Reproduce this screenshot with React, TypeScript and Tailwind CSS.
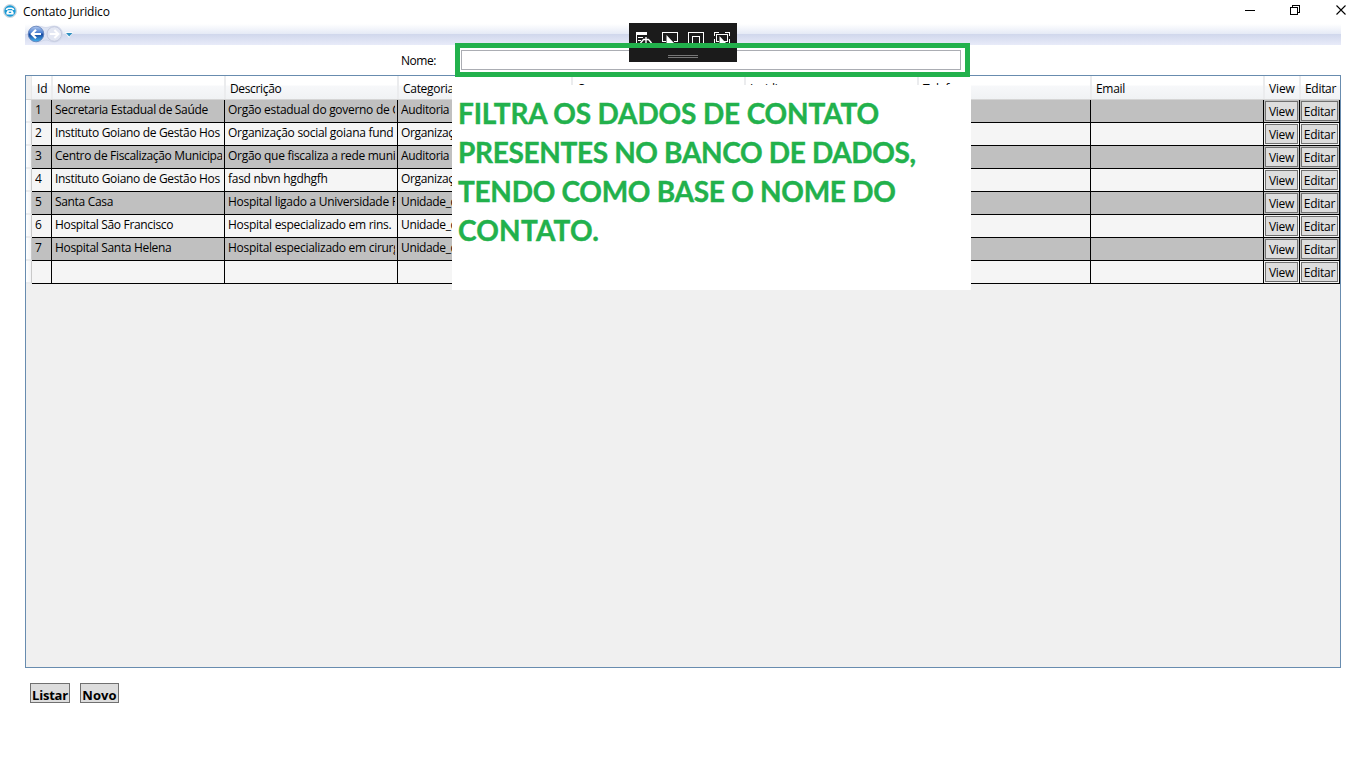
import React from "react";

const COLS =
  "grid-cols-[6px_20px_173px_173px_174px_173px_173px_173px_173px_36px_40px]";

const HEADERS = [
  { label: "Id", track: "tracking-normal" },
  { label: "Nome", track: "tracking-[-0.3px]" },
  { label: "Descrição", track: "tracking-[-0.35px]" },
  { label: "Categoria", track: "tracking-[-0.3px]" },
  { label: "Cargo", track: "tracking-[-0.2px]" },
  { label: "Juridico", track: "tracking-[-0.2px]" },
  { label: "Telefone", track: "tracking-[-0.2px]" },
  { label: "Email", track: "tracking-[-0.3px]" },
  { label: "View", track: "tracking-[-0.1px]" },
  { label: "Editar", track: "tracking-[-0.3px]" },
];

const CELL_TRACK = [
  "tracking-normal",
  "tracking-[-0.33px]",
  "tracking-[-0.29px]",
  "tracking-[-0.36px]",
];

const ROWS = [
  ["1", "Secretaria Estadual de Saúde", "Orgão estadual do governo de Goiás", "Auditoria"],
  ["2", "Instituto Goiano de Gestão Hos", "Organização social goiana fund", "Organização"],
  ["3", "Centro de Fiscalização Municipal", "Orgão que fiscaliza a rede municipal", "Auditoria"],
  ["4", "Instituto Goiano de Gestão Hos", "fasd nbvn hgdhgfh", "Organização"],
  ["5", "Santa Casa", "Hospital ligado a Universidade Federal", "Unidade_de"],
  ["6", "Hospital São Francisco", "Hospital especializado em rins.", "Unidade_de"],
  ["7", "Hospital Santa Helena", "Hospital especializado em cirurgias", "Unidade_de"],
  ["", "", "", ""],
];

function PhoneIcon() {
  return (
    <svg className="ml-[3px] mt-[4px] h-[14px] w-[14px] shrink-0" viewBox="0 0 14 14">
      <circle cx="7" cy="7" r="6.6" fill="#d5dde2" stroke="#c3ced6" strokeWidth=".6" />
      <circle cx="7" cy="7" r="5.7" fill="#1b9ad6" />
      <path d="M2.800 5.900V4.900C4.400 3.200 9.600 3.200 11.200 4.900v1H9.300V5H4.700v.9z" fill="#fff" />
      <path d="M4.600 6.200h4.800l1.200 2.300v1.900H3.400V8.500z" fill="#fff" />
      <path d="M5.800 7.700h2.400v1.300H5.800z" fill="#1b9ad6" />
    </svg>
  );
}

function NavIcons() {
  return (
    <svg className="h-[21px] w-[52px]" viewBox="25 24 52 21">
      <defs>
        <linearGradient id="back" x1="0" y1="0" x2="0" y2="1">
          <stop offset="0" stopColor="#b4c9ee" />
          <stop offset=".42" stopColor="#4a7fd0" />
          <stop offset=".52" stopColor="#17499f" />
          <stop offset="1" stopColor="#46b4f0" />
        </linearGradient>
      </defs>
      <path d="M36 26c6 0 7 1.500 10 1.500S50 26 54.500 26a8 8 0 0 1 0 16C50 42 49 40 46 40s-4 2-10 2z" fill="#dde3f2" stroke="#c9d0e4" strokeWidth=".6" />
      <circle cx="36" cy="34" r="7.800" fill="url(#back)" stroke="#5d7db8" strokeWidth=".8" />
      <path d="M41 34h-9M36 29.800L31.800 34l4.200 4.200" fill="none" stroke="#fff" strokeWidth="2.200" />
      <circle cx="54.300" cy="34" r="7.300" fill="#e3e7f3" stroke="#bfc5da" strokeWidth=".9" />
      <path d="M49.800 34h8.400M54.400 30l4 4-4 4" fill="none" stroke="#fff" strokeWidth="2" />
      <path d="M65 32.200h8L69 38z" fill="#fff" />
      <path d="M66 33h6.400L69.200 36.600z" fill="#2e8fc0" />
    </svg>
  );
}

function WindowControls() {
  return (
    <svg className="ml-auto h-[22px] w-[126px]" viewBox="1240 0 126 22" fill="none" stroke="#000" shapeRendering="crispEdges">
      <path d="M1245 10.500h10" />
      <path d="M1290.500 7.500h7v7h-7zM1292.500 7v-1.500h7v7h-2" />
      <path d="M1336.500 5.500l9 9M1345.500 5.500l-9 9" shapeRendering="auto" strokeWidth="1.1" />
    </svg>
  );
}

function DebugBar() {
  return (
    <div className="absolute left-[629px] top-[23px] h-[39px] w-[108px] bg-[#1b1b1b]">
      <svg className="h-[39px] w-[108px]" viewBox="629 23 108 39" fill="none" stroke="#fff" shapeRendering="crispEdges">
        <path d="M636 32h11v3h-11z" fill="#fff" stroke="none" />
        <path d="M636.500 35v8M638 37.500h5M638 40.500h3" />
        <path d="M640.500 43l3-3.500h5l3 3.500M646 37v6" shapeRendering="auto" strokeWidth="1.400" />
        <path d="M666 41.500h-3.500v-9h15v9h-4" />
        <path d="M666.500 35l7.500 8h-7.500z" fill="#fff" stroke="none" shapeRendering="auto" />
        <path d="M688.500 44V32.500h15V44M692.500 44v-7.500h7V44" />
        <path d="M714.500 36v-3.500h4M725 32.500h4.500V36M714.500 39v4M729.500 39v4M719 41.500h-2.500v-7h11v7H724" />
        <path d="M719.500 36l6.500 7h-6.500z" fill="#fff" stroke="none" shapeRendering="auto" />
        <path d="M668 55.500h30M668 57.500h30" stroke="#777" />
      </svg>
    </div>
  );
}

function CellButton({ label }: { label: string }) {
  return (
    <div className="border-b border-r border-black p-px">
      <button className="flex h-full w-full items-center justify-center border border-[#707070] bg-[#ddd] pt-[2px] leading-none tracking-[-0.25px]">
        {label}
      </button>
    </div>
  );
}

export default function App() {
  return (
    <div className="relative h-[768px] w-[1366px] overflow-hidden bg-white font-['Open_Sans','Noto_Sans',sans-serif] text-[12px] text-black">
      <div className="flex h-[24px]">
        <PhoneIcon />
        <span className="ml-[6px] mt-[4px] leading-[16px] tracking-[-0.18px]">Contato Juridico</span>
        <WindowControls />
      </div>
      <div className="ml-[25px] h-[21px] w-[1316px] bg-[linear-gradient(#ffffff_0px,#e5eaf6_10px,#d0d7ec_10px,#e8ebf9_21px)]">
        <NavIcons />
      </div>
      <div className="flex h-[30px] pl-[401px]">
        <label className="mt-[8px] w-[60px] leading-[16px] tracking-[-0.45px]">Nome:</label>
        <input className="mt-[5px] h-[20px] w-[500px] border border-[#abadb3] bg-white outline-none" />
      </div>

      <div className="ml-[25px] h-[593px] w-[1316px] overflow-hidden border border-[#688caf] bg-[#f0f0f0]">
        <div className={`grid h-[24px] border-b border-[#d5d5d5] bg-[linear-gradient(#ffffff_0px,#ffffff_9px,#f7f8fa_10px,#f0f2f4_23px)] ${COLS}`}>
          <div className="border-r border-[#e8e8e8] bg-[#f0f0f0]" />
          {HEADERS.map((h, i) => (
            <div
              key={h.label}
              className={`flex overflow-hidden whitespace-nowrap pt-[5px] leading-[16px] ${h.track} ${i > 0 ? "-ml-px border-l-2 border-[#ebecee] pl-[4px]" : "pl-[5px]"}`}
            >
              {h.label}
            </div>
          ))}
        </div>
        {ROWS.map((row, r) => (
          <div key={r} className={`grid h-[23px] ${COLS} ${r % 2 === 0 && r < 7 ? "bg-[#c0c0c0]" : "bg-[#f5f5f5]"}`}>
            <div className="border-b-2 border-r border-b-[#ebecee] border-r-[#c9c9c9] bg-[linear-gradient(90deg,#ffffff,#f3f4f6)]" />
            {[...row, "", "", "", ""].map((text, c) => (
              <div key={c} className="overflow-hidden border-b border-r border-black pl-[3px] pr-[2px]">
                <div className={`overflow-hidden whitespace-nowrap pt-[2px] leading-[16px] ${CELL_TRACK[c] ?? ""}`}>{text}</div>
              </div>
            ))}
            <CellButton label="View" />
            <CellButton label="Editar" />
          </div>
        ))}
      </div>

      <div className="flex gap-[10px] pl-[30px] pt-[15px] text-[13px] font-bold leading-[22px]">
        <button className="h-[20px] w-[40px] whitespace-nowrap border border-[#707070] bg-[#ddd] tracking-[-0.2px]">Listar</button>
        <button className="h-[20px] w-[39px] whitespace-nowrap border border-[#707070] bg-[#ddd] tracking-[0.1px]">Novo</button>
      </div>

      <DebugBar />
      <div className="absolute left-[455px] top-[43px] h-[34px] w-[515px] border-[5px] border-[#22b14c]" />
      <div className="absolute left-[452px] top-[85px] h-[205px] w-[519px] whitespace-nowrap bg-white pl-[6px] pt-[9px] font-['Lato','Open_Sans',sans-serif] text-[28px] font-bold leading-[39px] text-[#22b14c] [-webkit-text-stroke:0.4px_#22b14c]">
        <p className="tracking-[-0.15px]">FILTRA OS DADOS DE CONTATO</p>
        <p className="tracking-[-0.34px]">PRESENTES NO BANCO DE DADOS,</p>
        <p className="tracking-[-0.28px]">TENDO COMO BASE O NOME DO</p>
        <p className="tracking-[0.2px]">CONTATO.</p>
      </div>
    </div>
  );
}
